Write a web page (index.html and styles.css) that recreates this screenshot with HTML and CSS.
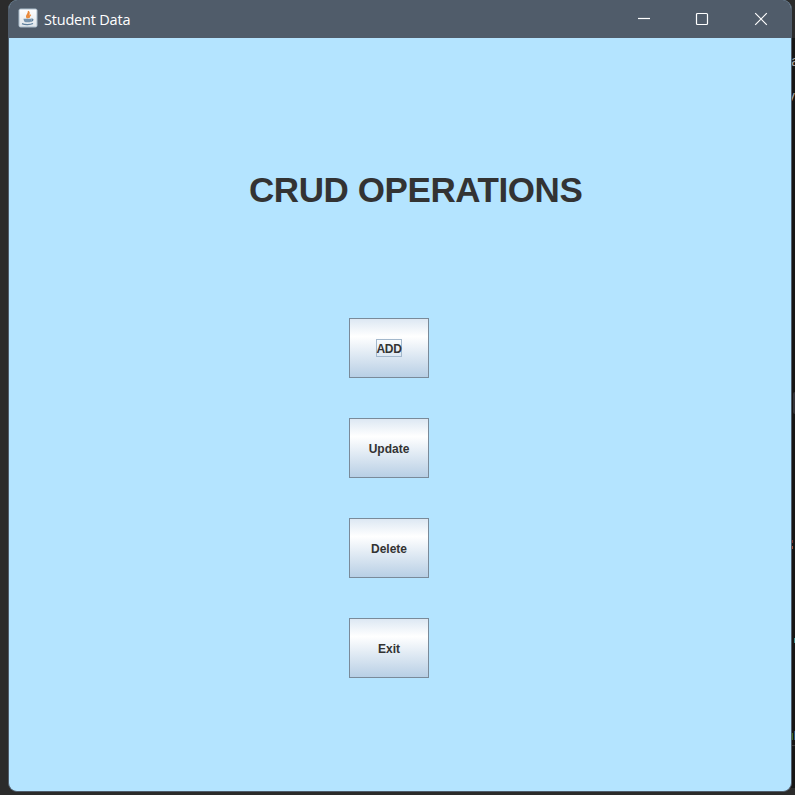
FILE: index.html
```html
<!DOCTYPE html>
<html lang="en">
<head>
<meta charset="utf-8">
<title>Student Data</title>
<link rel="stylesheet" href="styles.css">
</head>
<body>
<div class="backdrop" aria-hidden="true">
  <span class="frag frag-a">a</span>
  <span class="frag frag-v">v</span>
  <i class="scroll"></i>
  <i class="tick red"></i>
  <i class="tick orange"></i>
  <i class="tick teal"></i>
  <i class="tick green"></i>
  <i class="tick blue"></i>
  <i class="rule"></i>
</div>
<main class="window">
  <header class="titlebar">
    <svg class="app-icon" width="20" height="20" viewBox="0 0 20 20">
      <defs><linearGradient id="tile" x2="0" y2="1"><stop offset="0" stop-color="#fff"/><stop offset="1" stop-color="#dfe5ea"/></linearGradient></defs>
      <rect x="1" y="1" width="18" height="18" rx="1.5" fill="url(#tile)" stroke="#a9bccb" stroke-width="1"/>
      <path d="M9.6 10.2C6.500 7.500 11.400 6.600 10.300 3.200C13 5.800 8.800 7.200 10.600 9.800M11.400 9.800C10.600 8.600 12 7.800 12.600 6.600" fill="none" stroke="#ea8a3c" stroke-width="1.4"/>
      <path d="M5.500 10.700h7.800c0 2-.7 3.200-1.800 3.600H7.800c-1.300-.4-2.300-1.600-2.300-3.600z" fill="#7593ad"/>
      <path d="M13.200 11.300c2.400-.8 2.400 1.700-.7 2M4 15.600c2.600 1.300 8.300 1.300 11-.1" fill="none" stroke="#5d7f9c" stroke-width="1.2"/>
    </svg>
    <span class="caption">Student Data</span>
    <nav class="controls">
      <svg width="14" height="14" viewBox="0 0 14 14"><path d="M1 6.500h12"/></svg>
      <svg width="14" height="14" viewBox="0 0 14 14"><rect x="1.500" y="1.500" width="11" height="11" rx="1"/></svg>
      <svg width="14" height="14" viewBox="0 0 14 14"><path d="M1.200 1.200l11.600 11.600M12.800 1.200L1.200 12.800"/></svg>
    </nav>
  </header>
  <section class="content">
    <h1>CRUD OPERATIONS</h1>
    <div class="actions">
      <button class="focused"><span>ADD</span></button>
      <button><span>Update</span></button>
      <button><span>Delete</span></button>
      <button><span>Exit</span></button>
    </div>
  </section>
</main>
</body>
</html>
```
FILE: styles.css
```css
* { box-sizing: border-box; }
body {
  margin: 0;
  height: 795px;
  overflow: hidden;
  position: relative;
  background: #2b2b2b;
  font-family: "Liberation Sans", Arial, sans-serif;
}
.backdrop {
  position: absolute;
  left: 785px;
  top: 38px;
  width: 10px;
  height: 750px;
  overflow: hidden;
  background: #161616;
}
.backdrop > * { position: absolute; left: 7px; }
.frag { font: 14px/16px "Liberation Mono", monospace; color: #a5a5a5; }
.frag-a { top: 16px; left: 6px; }
.frag-v { top: 51px; left: 2px; }
.scroll { top: 354px; left: 8px; width: 4px; height: 22px; border-radius: 2px; background: #34343a; }
.tick { width: 1px; height: 3px; }
.red { top: 502px; background: #7c302d; }
.orange { top: 508px; background: #a4523c; }
.teal { top: 600px; left: 9px; height: 5px; background: #3f8d8d; }
.green { top: 695px; height: 7px; background: #3f6d24; }
.blue { top: 693px; left: 9px; height: 9px; background: #285579; }
.rule { top: 707px; width: 3px; height: 1px; background: #3c3c3c; }

.window {
  position: relative;
  width: 784px;
  height: 792px;
  margin-left: 8px;
  border: 1px solid #505c6a;
  border-top: 0;
  border-radius: 9px;
  overflow: hidden;
  background: #b4e4ff;
}
.titlebar {
  display: flex;
  align-items: center;
  height: 38px;
  padding: 0 23px 0 9px;
  background: #505c6a;
  color: #fff;
}
.app-icon { margin-top: -2px; }
.caption {
  margin: 2px 0 0 6px;
  font: 14.500px/20px "Open Sans", "Noto Sans", sans-serif;
  letter-spacing: -0.2px;
}
.controls { display: flex; gap: 44px; margin-left: auto; }
.controls svg { fill: none; stroke: #fff; stroke-width: 1.200; }
.controls svg:last-child { margin-left: 1px; }
.content { display: flex; flex-direction: column; }
h1 {
  margin: 132px 0 0 240px;
  font-size: 35px;
  line-height: 40px;
  letter-spacing: -0.42px;
  color: #333;
  white-space: nowrap;
}
.actions {
  display: flex;
  flex-direction: column;
  gap: 40px;
  margin: 108px 0 0 340px;
}
button {
  display: flex;
  align-items: center;
  justify-content: center;
  width: 80px;
  height: 60px;
  padding: 1px 0 0;
  border: 1px solid #7a8a99;
  border-radius: 0;
  background: linear-gradient(#dde8f3 0%, #fff 30%, #b8cfe5 100%);
  color: #333;
  font: bold 12px/16px "Liberation Sans", Arial, sans-serif;
}
.focused { padding: 0; }
.focused span {
  display: flex;
  justify-content: center;
  width: 26px;
  height: 18px;
  margin-top: -1px;
  border: 1px solid #a3b8cc;
  line-height: 18px;
  letter-spacing: -0.3px;
}
```
